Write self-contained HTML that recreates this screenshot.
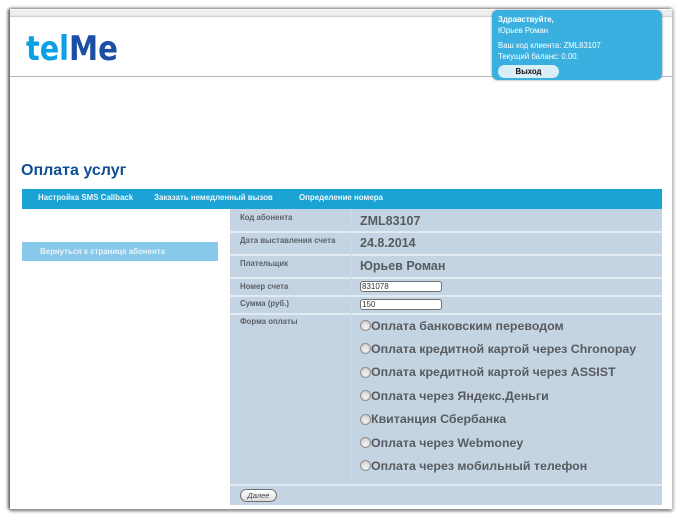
<!DOCTYPE html>
<html><head><meta charset="utf-8">
<style>
html,body{margin:0;padding:0;background:#fff}
body{width:680px;height:520px;position:relative;overflow:hidden;font-family:"Liberation Sans",sans-serif}
#w{position:absolute;left:0;top:0;width:680px;height:520px;filter:blur(0.35px)}
.a{position:absolute;white-space:nowrap}
.r{position:absolute;background:#c4d4e2}
.l{position:absolute;left:240px;font-size:7.8px;font-weight:bold;color:#5c6168;line-height:10px;white-space:nowrap}
.v{position:absolute;left:360px;font-size:12.5px;font-weight:bold;color:#585b5f;line-height:16px;white-space:nowrap}
.o{position:absolute;left:371px;font-size:12.4px;font-weight:bold;color:#585b5f;line-height:14px;white-space:nowrap}
.c{position:absolute;left:360px;width:11px;height:11px;border-radius:50%;box-sizing:border-box;border:1px solid #909090;background:radial-gradient(circle at 50% 70%,#f4f4f4,#c8c8c8)}
.i{position:absolute;left:360px;width:82px;height:11px;box-sizing:border-box;background:#fff;border:1px solid #707070;border-radius:3px;font-size:8px;line-height:9px;color:#333;padding-left:1px}
.n{position:absolute;top:193px;font-size:7.9px;font-weight:bold;color:#eef8fc;line-height:10px;white-space:nowrap}
.t{font-size:7.8px;color:#fff;line-height:10px}
</style></head><body><div id="w">
<div class="a" style="left:10px;top:9px;width:662px;height:500px;background:#fff;box-shadow:-2px 0 3px #666,2px 1px 3px #ccc,0 2px 3px #777,0 -1px 3px #aaa"></div>
<div class="a" style="left:10px;top:10px;width:662px;height:7px;background:linear-gradient(#e6e6e6,#f0f0f0 30%,#ececec 75%,#c8c8c8)"></div>
<div class="a" style="left:10px;top:76px;width:662px;height:1px;background:#b5b5b5"></div>

<svg class="a" style="left:24px;top:28px" width="100" height="36" viewBox="0 0 100 36">
<text x="2" y="32" font-family="DejaVu Sans" font-weight="bold" font-size="34" textLength="43" lengthAdjust="spacingAndGlyphs" fill="#0aa0e6">tel</text>
<text x="45" y="32" font-family="DejaVu Sans" font-weight="bold" font-size="34" textLength="49" lengthAdjust="spacingAndGlyphs" fill="#1c4fa3">Me</text>
</svg>

<div class="a" style="left:492px;top:10px;width:170px;height:70px;background:#39b0e0;border-radius:6px;box-shadow:0 0 2px #888"></div>
<div class="a t" style="left:498px;top:15px;font-weight:bold">Здравствуйте,</div>
<div class="a t" style="left:498px;top:26px">Юрьев Роман</div>
<div class="a t" style="left:498px;top:41px">Ваш код клиента: ZML83107</div>
<div class="a t" style="left:498px;top:52px">Текущий баланс: 0.00.</div>
<div class="a" style="left:498px;top:65px;width:61px;height:13px;background:#d8eef8;border-radius:7px;text-align:center;font-size:7.8px;font-weight:bold;color:#111;line-height:13px">Выход</div>

<div class="a" style="left:21px;top:161px;font-size:16px;font-weight:bold;color:#0f4f94;line-height:20px">Оплата услуг</div>

<div class="a" style="left:22px;top:189px;width:640px;height:20px;background:#1ba3d6"></div>
<div class="n" style="left:38px">Настройка SMS Callback</div>
<div class="n" style="left:154px">Заказать немедленный вызов</div>
<div class="n" style="left:299px">Определение номера</div>

<div class="a" style="left:22px;top:242px;width:196px;height:19px;background:#88c8e8"></div>
<div class="a" style="left:40px;top:247px;font-size:7.9px;font-weight:bold;color:#e6f4fb;line-height:10px">Вернуться к странице абонента</div>

<div class="a" style="left:230px;top:209px;width:432px;height:296px;background:#e2ebf2"></div>
<div class="r" style="left:230px;top:209px;width:432px;height:22px"></div>
<div class="r" style="left:230px;top:233px;width:432px;height:21px"></div>
<div class="r" style="left:230px;top:256px;width:432px;height:21px"></div>
<div class="r" style="left:230px;top:279px;width:432px;height:16px"></div>
<div class="r" style="left:230px;top:297px;width:432px;height:16px"></div>
<div class="r" style="left:230px;top:315px;width:432px;height:169px"></div>
<div class="r" style="left:230px;top:486px;width:432px;height:19px"></div>
<div class="a" style="left:351px;top:209px;width:1px;height:275px;background:#ccdae6"></div>

<div class="l" style="top:213px">Код абонента</div>
<div class="l" style="top:236px">Дата выставления счета</div>
<div class="l" style="top:259px">Плательщик</div>
<div class="l" style="top:282px">Номер счета</div>
<div class="l" style="top:299px">Сумма (руб.)</div>
<div class="l" style="top:317px">Форма оплаты</div>

<div class="v" style="top:213px">ZML83107</div>
<div class="v" style="top:235px">24.8.2014</div>
<div class="v" style="top:258px">Юрьев Роман</div>
<div class="i" style="top:281px">831078</div>
<div class="i" style="top:299px">150</div>

<div class="c" style="top:320px"></div><div class="o" style="top:319px">Оплата банковским переводом</div>
<div class="c" style="top:343px"></div><div class="o" style="top:342px">Оплата кредитной картой через Chronopay</div>
<div class="c" style="top:367px"></div><div class="o" style="top:365px">Оплата кредитной картой через ASSIST</div>
<div class="c" style="top:390px"></div><div class="o" style="top:389px">Оплата через Яндекс.Деньги</div>
<div class="c" style="top:414px"></div><div class="o" style="top:412px">Квитанция Сбербанка</div>
<div class="c" style="top:437px"></div><div class="o" style="top:436px">Оплата через Webmoney</div>
<div class="c" style="top:460px"></div><div class="o" style="top:459px">Оплата через мобильный телефон</div>

<div class="a" style="left:240px;top:489px;width:37px;height:13px;box-sizing:border-box;border:1px solid #707070;border-radius:7px;background:linear-gradient(#fff,#dcdcdc);text-align:center;font-size:7.5px;font-style:italic;line-height:11px;color:#444">Далее</div>
</div></body></html>
